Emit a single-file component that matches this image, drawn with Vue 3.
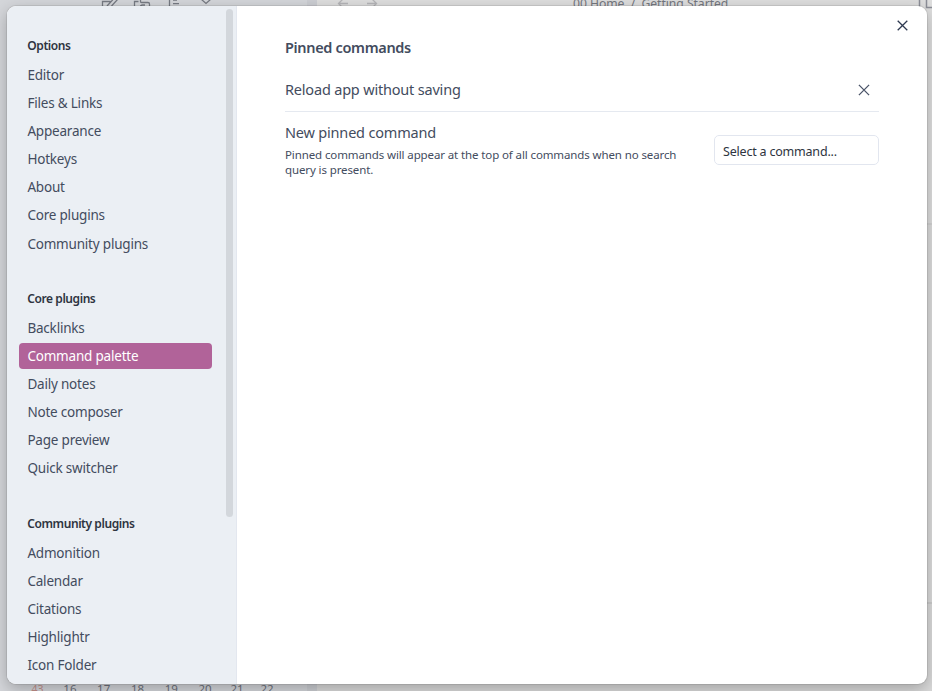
<script setup>
const groups = [
  { title: 'Options', items: ['Editor', 'Files & Links', 'Appearance', 'Hotkeys', 'About', 'Core plugins', 'Community plugins'] },
  { title: 'Core plugins', items: ['Backlinks', 'Command palette', 'Daily notes', 'Note composer', 'Page preview', 'Quick switcher'] },
  { title: 'Community plugins', items: ['Admonition', 'Calendar', 'Citations', 'Highlightr', 'Icon Folder'] }
]
const active = 'Command palette'
const days = ['43', '16', '17', '18', '19', '20', '21', '22']
</script>

<template>
  <div class="screen">
    <div class="workspace">
      <div class="left-pane">
        <svg class="tools" width="120" height="10" viewBox="0 0 120 10">
          <path d="M2.500 10V1.500h8M7 6l6.500-7M11.500 6l6.500-7M34.500 10V1.500h4M40.500-1v2.500q0 1 1 1h6.500q1.500 0 1.500 1.500V10M45 5h-2.500q-2 0-2 2M69.500-1v11M73 .2h4M73 3.700h6M101-1l5 4.500L111-1" />
        </svg>
        <div class="calendar"><span v-for="d in days" :key="d">{{ d }}</span></div>
      </div>
      <div class="divider"></div>
      <div class="note-pane">
        <svg class="arrows" width="42" height="10" viewBox="0 0 42 10">
          <path d="M6-1 1.500 3.500 6 8M1.500 3.500H11M35-1l4.500 4.500L35 8M39.500 3.500H30" />
        </svg>
        <div class="crumb">00 Home&nbsp; /&nbsp; Getting Started</div>
        <svg class="book" width="17" height="10" viewBox="0 0 17 10">
          <path d="M1.500-1v8M8.500-1v8.500H17M15.500-1v8" />
        </svg>
      </div>
    </div>

    <div class="modal">
      <nav class="sidebar">
        <section v-for="g in groups" :key="g.title" class="group">
          <h2>{{ g.title }}</h2>
          <div v-for="i in g.items" :key="i" class="item" :class="{ active: g.title === 'Core plugins' && i === active }"><span>{{ i }}</span></div>
        </section>
        <div class="thumb"></div>
      </nav>
      <main class="content">
        <button class="close" aria-label="Close">
          <svg width="11" height="11" viewBox="0 0 11 11"><path d="M.7.700l9.600 9.600M10.300.7.700 10.300" /></svg>
        </button>
        <h1>Pinned commands</h1>
        <div class="row first">
          <div class="name reload">Reload app without saving</div>
          <svg class="remove" width="12" height="12" viewBox="0 0 12 12"><path d="M.9.900l10.200 10.200M11.100.9.900 11.100" /></svg>
        </div>
        <div class="row second">
          <div class="info">
            <div class="name">New pinned command</div>
            <p>Pinned commands will appear at the top of all commands when no search<br>query is present.</p>
          </div>
          <div class="select">Select a command...</div>
        </div>
      </main>
    </div>
  </div>
</template>

<style>
body { overflow: hidden; }
</style>

<style scoped>
* { box-sizing: border-box; }
h1, h2, p { margin: 0; }
svg { fill: none; display: block; }
.screen {
  position: relative;
  width: 932px;
  height: 691px;
  overflow: hidden;
  font-family: "Noto Sans", sans-serif;
  color: #424858;
}
.workspace { display: flex; height: 691px; background: #d9d9d9; }
.left-pane {
  flex: none;
  width: 307px;
  background: #d4d6da;
  display: flex;
  flex-direction: column;
  justify-content: space-between;
}
.tools { margin-left: 100px; stroke: #777b83; stroke-width: 1.3; }
.calendar {
  display: flex;
  height: 12px;
  padding-left: 22px;
  font-size: 11.500px;
  line-height: 20px;
  color: #6c707b;
}
.calendar span { width: 33.800px; text-align: center; }
.calendar span:first-child { width: 31px; font-size: 10.500px; color: #c38f8a; }
.calendar span:nth-child(n+7) { width: 30px; }
.divider { flex: none; width: 10px; background: #ccced3; }
.note-pane { flex: 1; min-width: 0; display: flex; background: linear-gradient(#dedede 0 223px, #d2d2d2 223px 225px, #dcdcdc 225px 602px, #cccccc 602px 604px, #dadada 604px); }
.arrows { flex: none; margin-left: 20px; stroke: #b5b5b8; stroke-width: 1.3; }
.crumb {
  flex: none;
  margin-left: 194px;
  width: 170px;
  height: 16px;
  margin-top: -5px;
  font-size: 12.200px;
  line-height: 17px;
  letter-spacing: -.05px;
  white-space: nowrap;
  color: #74777f;
}
.book { flex: none; margin-left: 175px; stroke: #8c8e97; stroke-width: 1.5; }
.modal {
  position: absolute;
  left: 7px;
  top: 6px;
  width: 920px;
  height: 678px;
  display: flex;
  overflow: hidden;
  border-radius: 9px;
  background: #fff;
  box-shadow: 0 0 0 1px rgba(0, 0, 0, .08), 0 5px 16px rgba(0, 0, 0, .26);
}
.sidebar {
  position: relative;
  flex: none;
  width: 230px;
  height: 678px;
  padding: 27px 24px 0 12px;
  overflow: hidden;
  background: #ebeff4;
  border-right: 1px solid #e3e7ef;
}
.group { margin-bottom: 29.600px; }
h2 {
  height: 28.850px;
  padding-left: 8.300px;
  font-size: 12px;
  line-height: 26px;
  font-weight: 600;
  letter-spacing: -.43px;
  color: #2e3440;
}
.item {
  height: 26px;
  margin-bottom: 2.120px;
  padding-left: 8.400px;
  border-radius: 4px;
  font-size: 13.500px;
  line-height: 26px;
  letter-spacing: -.2px;
  color: #434c5e;
}
.item.active { background: #b16399; color: #fff; }
.thumb {
  position: absolute;
  left: 219px;
  top: 3px;
  width: 7px;
  height: 508px;
  border-radius: 4px;
  background: #d3d7dc;
}
.content { position: relative; flex: 1; padding: 30px 48px 0; }
.close {
  position: absolute;
  top: 14px;
  right: 19px;
  padding: 0;
  border: 0;
  background: none;
  stroke: #2e3950;
  stroke-width: 1.3;
}
h1 { font-size: 14.500px; line-height: 22px; font-weight: 600; letter-spacing: -.33px; color: #434c5e; }
.row { display: flex; justify-content: space-between; }
.first { align-items: center; height: 54px; padding: 10px 9px 0 0; border-bottom: 1px solid #e5e9f0; }
.remove { stroke: #4c566a; stroke-width: 1.3; }
.name { font-size: 14.500px; line-height: 22px; letter-spacing: -.19px; color: #434c5e; }
.reload { padding-bottom: 2px; }
.second { padding-top: 9px; }
.info p { margin-top: 4px; font-size: 11.500px; line-height: 15px; letter-spacing: -.115px; white-space: nowrap; color: #434c5e; }
.select {
  width: 165px;
  height: 30px;
  margin-top: 14px;
  padding-left: 8px;
  border: 1px solid #e2e6ef;
  border-radius: 5px;
  font-size: 12.500px;
  line-height: 31px;
  letter-spacing: -.2px;
  color: #2e3440;
}
</style>
